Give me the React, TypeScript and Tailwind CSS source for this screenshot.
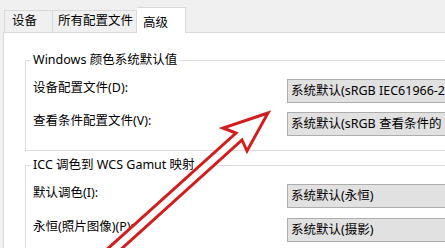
const FONT = "font-['Segoe_UI','Noto_Sans','Noto_Sans_CJK_SC',sans-serif]";

type Row = { label: string; value: string };

const WCS_ROWS: Row[] = [
  { label: "设备配置文件(D):", value: "系统默认(sRGB IEC61966-2.1)" },
  { label: "查看条件配置文件(V):", value: "系统默认(sRGB 查看条件的 Windows 颜色系统默认值)" },
];

const ICC_ROWS: Row[] = [
  { label: "默认调色(I):", value: "系统默认(永恒)" },
  { label: "永恒(照片图像)(P):", value: "系统默认(摄影)" },
];

function Combo({ value }: { value: string }) {
  return (
    <div className="flex h-[24px] w-[220px] shrink-0 items-center overflow-hidden whitespace-nowrap border border-[#adadad] bg-[#e1e1e1] pl-[3px]">
      {value}
    </div>
  );
}

function GroupBox({
  title,
  rows,
  gap,
  className,
}: {
  title: string;
  rows: Row[];
  gap: string;
  className: string;
}) {
  return (
    <fieldset className={`w-[520px] min-w-0 border border-[#dcdcdc] pl-[5px] ${className}`}>
      <legend className="px-[2px] leading-[16px]">{title}</legend>
      <div className={`flex flex-col pl-[2px] pt-[11px] ${gap}`}>
        {rows.map((r) => (
          <div key={r.label} className="flex items-start">
            <span className="mt-[1px] w-[254px] shrink-0 leading-[16px]">{r.label}</span>
            <Combo value={r.value} />
          </div>
        ))}
      </div>
    </fieldset>
  );
}

export default function App() {
  return (
    <div
      className={`relative flex h-[248px] w-[445px] flex-col overflow-hidden bg-[#f0f0f0] text-[12.5px] text-black ${FONT}`}
    >
      {/* tabs */}
      <div className="flex h-[32px] shrink-0 items-end pl-[4px]">
        <div className="flex h-[22px] w-[49px] items-center justify-start border border-b-0 border-[#d9d9d9] bg-[#f0f0f0] pl-[7px]">
          设备
        </div>
        <div className="flex h-[22px] w-[84px] items-center justify-start border border-b-0 border-l-0 border-[#d9d9d9] bg-[#f0f0f0] pl-[5px]">
          所有配置文件
        </div>
        <div className="relative z-10 -mb-px flex h-[26px] w-[49px] items-start justify-start border border-b-0 border-l-0 border-[#d9d9d9] bg-white pl-[6px] pt-[7px] leading-[16px]">
          高级
        </div>
      </div>

      {/* panel */}
      <div className="ml-[3px] flex-1 border-l border-t border-[#d9d9d9] bg-white pl-[21px]">
        <GroupBox
          title="Windows 颜色系统默认值"
          rows={WCS_ROWS}
          gap="gap-[9px]"
          className="mt-[19px] pb-[14px]"
        />
        <GroupBox
          title="ICC 调色到 WCS Gamut 映射"
          rows={ICC_ROWS}
          gap="gap-[10px]"
          className="mt-[6px] pb-[14px]"
        />
      </div>

      {/* red annotation arrow */}
      <svg
        className="pointer-events-none absolute inset-0 z-20"
        width="445"
        height="248"
        viewBox="0 0 445 248"
      >
        <polygon
          points="104,252 236,133 223,128 268,113 247,151 242,140 118,252"
          fill="#ffffff"
          stroke="#d21e1e"
          strokeWidth="3"
          strokeLinejoin="miter"
        />
      </svg>
    </div>
  );
}
